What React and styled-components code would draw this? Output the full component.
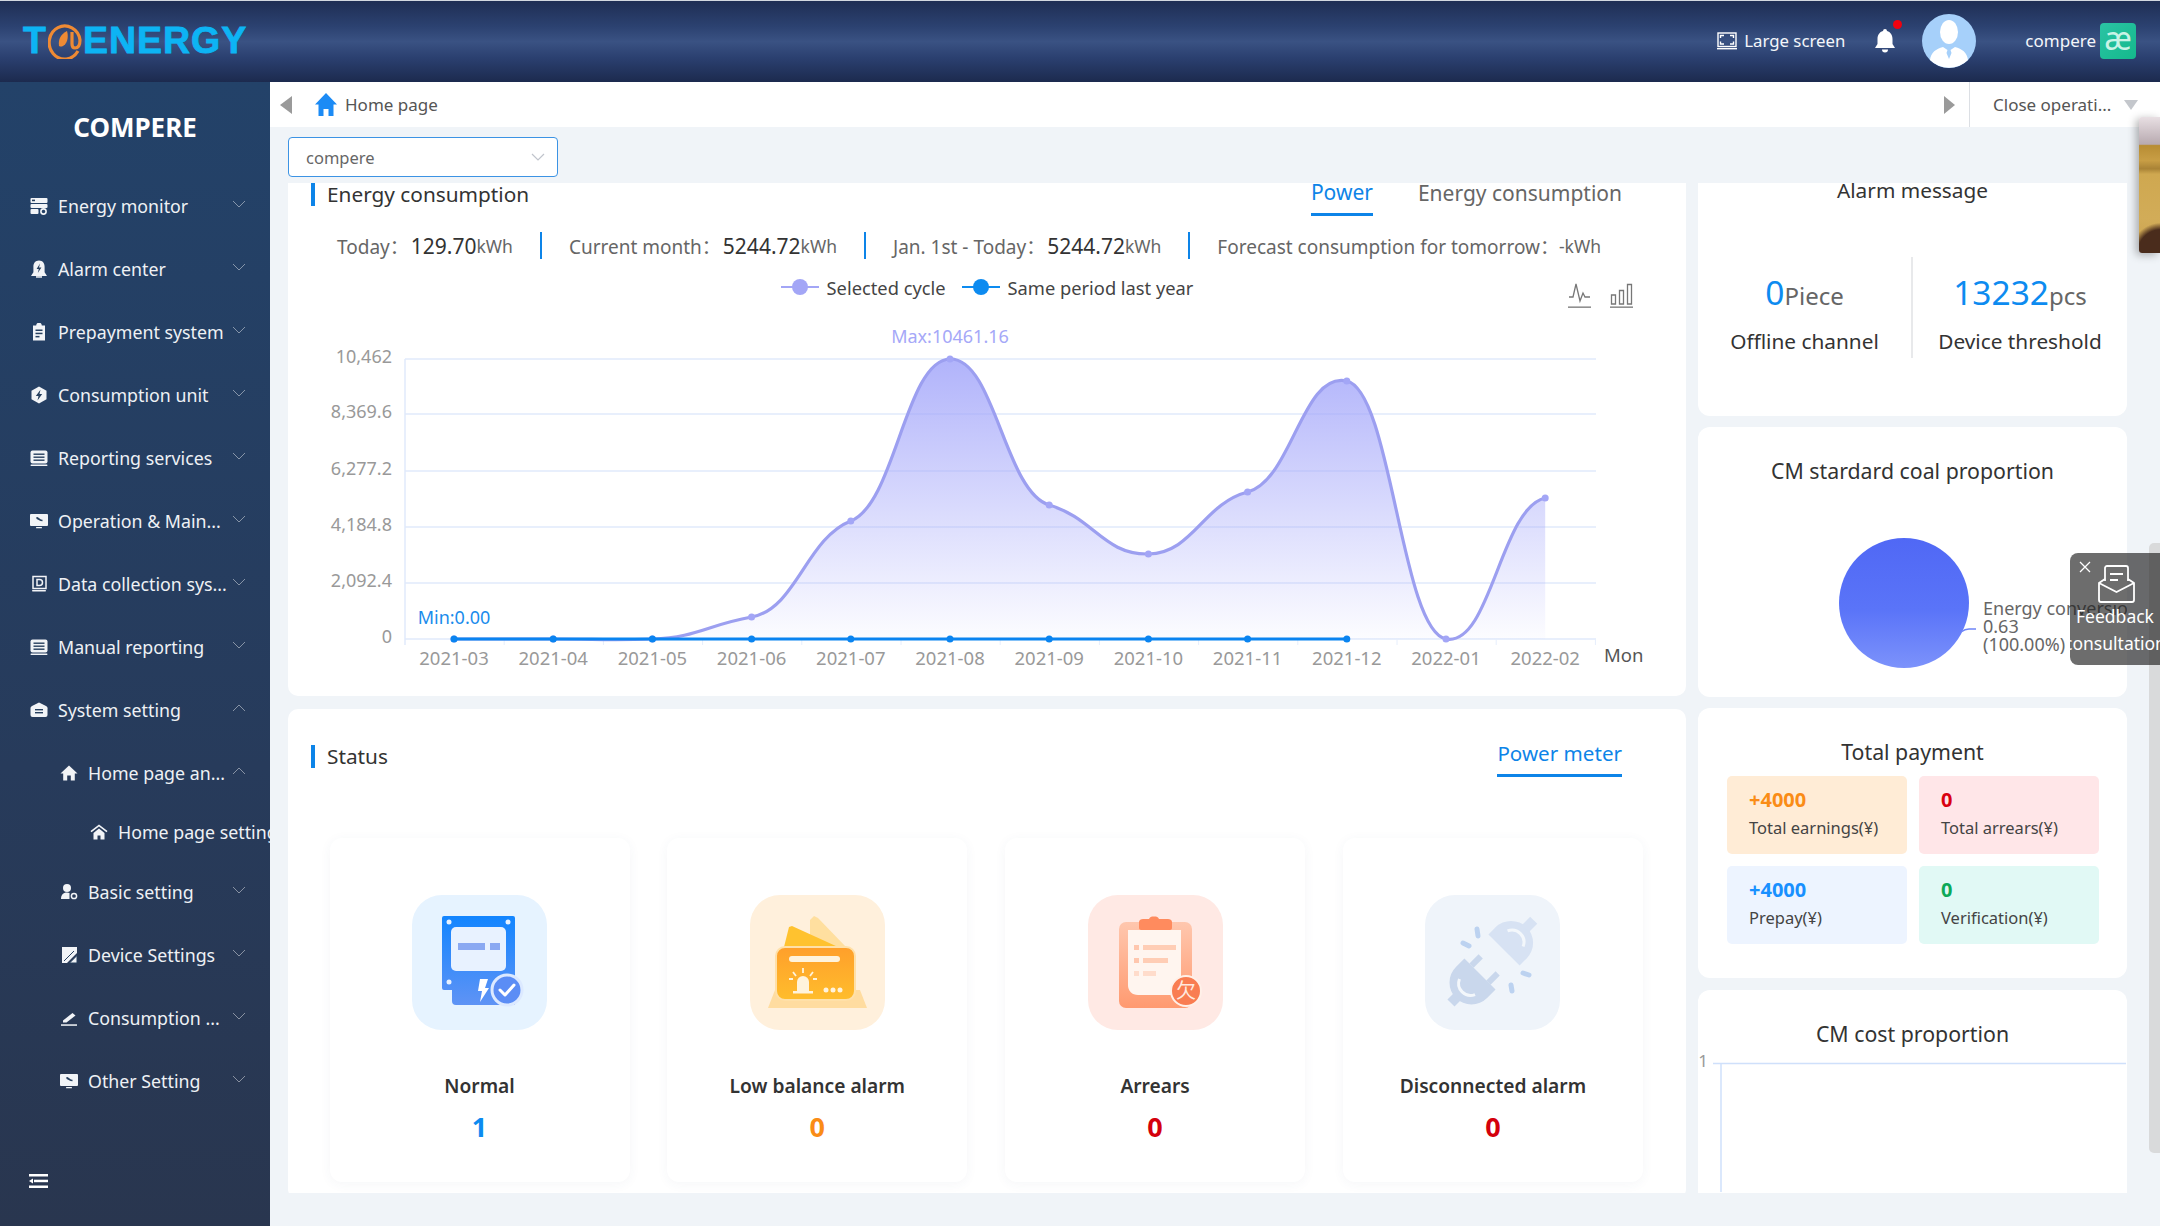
import styled, { createGlobalStyle } from "styled-components";

const GlobalStyle = createGlobalStyle`
  html, body {
    margin: 0;
    padding: 0;
    background: #f0f4f8;
  }
  * {
    box-sizing: border-box;
  }
  body {
    font-family: "Noto Sans", "Noto Sans CJK SC", sans-serif;
    color: #333;
  }
`;

const Page = styled.div`
  position: relative;
  width: 2160px;
  height: 1226px;
  overflow: hidden;
  display: flex;
  flex-direction: column;
  background: #f0f4f8;
`;

const TopBar = styled.header`
  height: 82px;
  flex: none;
  display: flex;
  align-items: center;
  border-top: 1px solid #d3d8e0;
  padding: 0 24px 2px 23px;
  color: #f4f6fa;
  background: linear-gradient(
    180deg,
    #1f2e54 0%,
    #2c4271 32%,
    #3a5283 50%,
    #2b4070 70%,
    #1c2a4e 100%
  );
`;

const Logo = styled.div`
  display: flex;
  align-items: center;
  gap: 1px;
  font-family: "Liberation Sans", sans-serif;
  font-weight: 700;
  font-size: 37.5px;
  letter-spacing: 1px;
  color: #0db4f4;
  -webkit-text-stroke: 0.8px #0db4f4;
`;

const TopRight = styled.div`
  margin-left: auto;
  display: flex;
  align-items: center;
`;

const ScreenLink = styled.div`
  display: flex;
  align-items: center;
  gap: 7px;
  font-size: 16.8px;
`;

const BellWrap = styled.div`
  position: relative;
  width: 20px;
  height: 24px;
  margin-left: 30px;
  margin-right: 27px;
`;

const RedDot = styled.span`
  position: absolute;
  top: -9px;
  right: -7px;
  width: 9px;
  height: 9px;
  border-radius: 50%;
  background: #f0020f;
`;

const UserName = styled.span`
  font-size: 17px;
  margin-left: 49px;
  margin-right: 4px;
`;

const BrandTile = styled.div`
  width: 36px;
  height: 36px;
  border-radius: 4px;
  display: flex;
  align-items: center;
  justify-content: center;
  background: linear-gradient(135deg, #2bc3a4, #14b98c);
  color: #c8f3e6;
  font-size: 32px;
  line-height: 1;
  padding-bottom: 5px;
`;

const Body = styled.div`
  flex: 1;
  min-height: 0;
  display: flex;
`;

const Sidebar = styled.aside`
  width: 270px;
  flex: none;
  display: flex;
  flex-direction: column;
  color: #eef1f5;
  background: linear-gradient(180deg, #234269 0%, #273b5b 60%, #29364f 100%);
`;

const Brand = styled.div`
  height: 92px;
  flex: none;
  display: flex;
  align-items: center;
  justify-content: center;
  padding-bottom: 3px;
  font-size: 26px;
  font-weight: 700;
  color: #fff;
`;

const MenuRow = styled.div`
  height: ${(p) => (p.$level === 3 ? 56 : 63)}px;
  flex: none;
  display: flex;
  align-items: center;
  overflow: hidden;
  white-space: nowrap;
  padding-left: ${(p) => 30 * p.$level}px;
  padding-right: 24px;
  font-size: 17.8px;
`;

const MenuIcon = styled.span`
  width: 18px;
  height: 18px;
  flex: none;
  margin-right: 10px;
  display: flex;
`;

const Chevron = styled.svg`
  width: 14px;
  height: 8px;
  flex: none;
  margin-left: auto;
  transform: translateY(-2px);
`;

const SideFoot = styled.div`
  margin-top: auto;
  height: 90px;
  display: flex;
  align-items: center;
  padding-left: 29px;
`;

const Main = styled.main`
  flex: 1;
  min-width: 0;
  display: flex;
  flex-direction: column;
`;

const Crumbs = styled.div`
  height: 45px;
  flex: none;
  display: flex;
  align-items: center;
  background: #fff;
  font-size: 17px;
  color: #555;
`;

const CrumbHome = styled.div`
  display: flex;
  align-items: center;
  gap: 8px;
  margin-left: 23px;
`;

const ArrowLeft = styled.span`
  margin-left: 10px;
  width: 0;
  height: 0;
  border-top: 9px solid transparent;
  border-bottom: 9px solid transparent;
  border-right: 12px solid #9a9a9a;
`;

const ArrowRight = styled.span`
  margin-left: auto;
  width: 0;
  height: 0;
  border-top: 9px solid transparent;
  border-bottom: 9px solid transparent;
  border-left: 11px solid #9a9a9a;
`;

const CloseOps = styled.div`
  width: 191px;
  height: 100%;
  margin-left: 14px;
  padding-left: 23px;
  display: flex;
  align-items: center;
  border-left: 1px solid #dcdfe4;
`;

const TriDown = styled.span`
  width: 0;
  height: 0;
  margin-left: 13px;
  border-left: 7px solid transparent;
  border-right: 7px solid transparent;
  border-top: 10px solid #c4c7cc;
`;

const FilterBar = styled.div`
  height: 56px;
  flex: none;
  padding: 10px 0 0 18px;
`;

const SelectBox = styled.div`
  width: 270px;
  height: 40px;
  display: flex;
  align-items: center;
  justify-content: space-between;
  padding: 0 12px 0 17px;
  background: #fff;
  border: 1px solid #3c93e4;
  border-radius: 4px;
  font-size: 16.5px;
  color: #666;
`;

const Scroller = styled.div`
  height: 1010px;
  flex: none;
  overflow: hidden;
  padding-left: 18px;
  display: flex;
  gap: 12px;
  align-items: flex-start;
`;

const LeftCol = styled.div`
  width: 1398px;
  flex: none;
  display: flex;
  flex-direction: column;
  gap: 13px;
`;

const RightCol = styled.div`
  width: 429px;
  flex: none;
  display: flex;
  flex-direction: column;
`;

const ChartCard = styled.section`
  height: 513px;
  background: #fff;
  border-radius: 0 0 10px 10px;
`;

const StatusCard = styled.section`
  height: 490px;
  padding-top: 34px;
  background: #fff;
  border-radius: 10px;
`;

const CardHead = styled.div`
  height: ${(p) => p.$height}px;
  display: flex;
  justify-content: space-between;
  align-items: flex-start;
  padding: 0 64px 0 23px;
`;

const CardTitle = styled.h2`
  margin: ${(p) => p.$top || 0}px 0 0;
  height: 23px;
  line-height: 23px;
  padding-left: 12px;
  border-left: 4px solid #0d84e8;
  font-size: 20.8px;
  font-weight: 400;
  color: #333;
`;

const Tabs = styled.div`
  display: flex;
  gap: 45px;
`;

const Tab = styled.div`
  height: ${(p) => p.$height}px;
  line-height: ${(p) => p.$line}px;
  font-size: ${(p) => p.$size || 21}px;
  color: ${(p) => (p.$active ? "#0d84e8" : "#666")};
  border-bottom: 3px solid ${(p) => (p.$active ? "#0d84e8" : "transparent")};
`;

const Stats = styled.div`
  height: 27px;
  margin-top: 16px;
  padding-left: 49px;
  display: flex;
  align-items: center;
  font-size: 19px;
  color: #666;
`;

const StatGroup = styled.div`
  display: flex;
  align-items: center;
`;

const StatValue = styled.span`
  font-size: 21px;
  color: #333;
  margin-left: 2px;
`;

const StatUnit = styled.span`
  font-size: 17.5px;
  color: #666;
`;

const StatSep = styled.span`
  width: 2px;
  height: 27px;
  margin: 0 27px;
  background: #0d84e8;
`;

const LegendRow = styled.div`
  position: relative;
  height: 28px;
  margin-top: 14px;
  display: flex;
  justify-content: center;
  align-items: center;
  gap: 16px;
  font-size: 18.3px;
  color: #444;
`;

const LegendItem = styled.div`
  display: flex;
  align-items: center;
  gap: 8px;
`;

const LegendMark = styled.span`
  position: relative;
  width: 38px;
  height: 2px;
  background: ${(p) => p.$color};

  &::after {
    content: "";
    position: absolute;
    left: 11px;
    top: -7px;
    width: 16px;
    height: 16px;
    border-radius: 50%;
    background: ${(p) => p.$color};
  }
`;

const ChartTools = styled.div`
  position: absolute;
  top: 10px;
  right: 53px;
  display: flex;
  gap: 19px;
`;

const MainChart = styled.svg`
  display: block;
  width: 1398px;
  height: 376px;
  margin-top: 19px;
`;

const MeterGrid = styled.div`
  display: grid;
  grid-template-columns: repeat(4, 300px);
  gap: 37.8px;
  margin-top: 61px;
  padding-left: 41.5px;
`;

const MeterCard = styled.div`
  height: 344px;
  padding-top: 57px;
  display: flex;
  flex-direction: column;
  align-items: center;
  background: #fff;
  border-radius: 12px;
  box-shadow: 0 2px 12px rgba(60, 80, 110, 0.05);
`;

const MeterTile = styled.div`
  width: 135px;
  height: 135px;
  border-radius: 30px;
  background: ${(p) => p.$bg};
`;

const MeterLabel = styled.div`
  margin-top: 42px;
  line-height: 28px;
  font-size: 19.2px;
  font-weight: 600;
  color: #333;
`;

const MeterValue = styled.div`
  margin-top: 9px;
  line-height: 36px;
  font-size: 27px;
  font-weight: 700;
  color: ${(p) => p.$color};
`;

const SideCard = styled.section`
  height: ${(p) => p.$height}px;
  margin-bottom: ${(p) => p.$gap || 0}px;
  flex: none;
  background: #fff;
  border-radius: 12px;
  overflow: hidden;
`;

const AlarmCard = styled(SideCard)`
  border-radius: 0 0 12px 12px;
  overflow: visible;
`;

const SideTitle = styled.h2`
  margin: 0;
  padding-top: ${(p) => p.$top}px;
  line-height: ${(p) => p.$line}px;
  text-align: center;
  font-size: ${(p) => p.$size || 21.3}px;
  font-weight: 400;
  color: #333;
`;

const AlarmStats = styled.div`
  display: grid;
  grid-template-columns: 213px 2px 1fr;
  height: 101px;
  margin-top: 60px;
`;

const AlarmDivider = styled.span`
  background: #e8e9eb;
`;

const AlarmCell = styled.div`
  padding-top: 11px;
  text-align: center;
`;

const AlarmNumber = styled.div`
  height: 48px;
  line-height: 48px;
  font-size: 33.5px;
  color: #0d8bf0;
`;

const AlarmUnit = styled.span`
  font-size: 24px;
  color: #666;
`;

const AlarmLabel = styled.div`
  margin-top: 13px;
  line-height: 24px;
  font-size: 20.8px;
  color: #333;
`;

const PieChart = styled.svg`
  display: block;
  width: 429px;
  height: 210px;
  margin-top: 1px;
`;

const PayGrid = styled.div`
  display: grid;
  grid-template-columns: 180px 180px;
  grid-auto-rows: 78px;
  gap: 12px;
  margin: 9px 0 0 29px;
`;

const PayTile = styled.div`
  padding: 12px 0 0 22px;
  border-radius: 5px;
  background: ${(p) => p.$bg};
`;

const PayValue = styled.div`
  line-height: 24px;
  font-size: 20px;
  font-weight: 700;
  color: ${(p) => p.$color};
`;

const PayLabel = styled.div`
  margin-top: 4px;
  line-height: 24px;
  font-size: 16.5px;
  color: #444;
`;

const CostChart = styled.svg`
  display: block;
  width: 429px;
  height: 143px;
`;

const ScrollThumb = styled.div`
  position: absolute;
  right: 0;
  top: 543px;
  width: 11px;
  height: 610px;
  border-radius: 5px 0 0 5px;
  background: #d9dadb;
`;

const Photo = styled.div`
  position: absolute;
  right: 0;
  top: 117px;
  width: 21px;
  height: 136px;
  border-radius: 3px 0 0 3px;
  box-shadow: -3px 2px 8px rgba(0, 0, 0, 0.3);
  background:
    radial-gradient(circle at 105% 100%, #4a2c1c 0, #4a2c1c 17%, transparent 22%),
    linear-gradient(
      180deg,
      #e8dfe3 0,
      #b8aab0 20%,
      #b88d34 21%,
      #c89e45 32%,
      #a98336 38%,
      #cfa850 42%,
      #d2ac58 75%,
      #c9a04f 100%
    );
`;

const Feedback = styled.div`
  position: absolute;
  right: 0;
  top: 553px;
  width: 90px;
  height: 112px;
  overflow: hidden;
  display: flex;
  flex-direction: column;
  align-items: center;
  padding-top: 12px;
  border-radius: 8px 0 0 8px;
  background: rgba(30, 30, 30, 0.65);
  color: #fff;
  font-size: 17.5px;
`;

const FeedbackClose = styled.svg`
  position: absolute;
  left: 9px;
  top: 8px;
`;

const FeedbackIcon = styled.svg`
  flex: none;
  margin-left: 3px;
`;

const FeedbackText = styled.div`
  width: 110px;
  flex: none;
  line-height: 27px;
  text-align: center;
  white-space: nowrap;
`;

const white = "#f2f4f7";
const navy = "#27405f";

const icons = {
  monitor: (
    <svg width="18" height="18" viewBox="0 0 18 18">
      <rect x="0.5" y="1" width="17" height="5" rx="1" fill={white} />
      <rect x="2" y="2.6" width="3" height="1.6" fill={navy} />
      <rect x="0.5" y="7" width="17" height="4" rx="1" fill={white} />
      <rect x="0.5" y="12" width="8" height="5" rx="1" fill={white} />
      <circle cx="13.5" cy="14.5" r="2.6" fill="none" stroke={white} strokeWidth="1.6" />
    </svg>
  ),
  alarm: (
    <svg width="18" height="18" viewBox="0 0 18 18">
      <path d="M9 0.5c-3.7 0-5.6 2.9-5.6 6.2v5.6L1 16h16l-2.4-3.7V6.7C14.600 3.400 12.700 0.500 9 0.500z" fill={white} />
      <path d="M10 3.500 6.600 9h2.200l-1 4 3.600-5.600H9z" fill={navy} />
      <rect x="6" y="16.200" width="6" height="1.500" fill={white} />
    </svg>
  ),
  prepay: (
    <svg width="18" height="18" viewBox="0 0 18 18">
      <path d="M3 2.500h3.200a2.800 2.800 0 0 1 5.600 0H15v15H3z" fill={white} />
      <rect x="5.500" y="6.500" width="7" height="1.500" fill={navy} />
      <rect x="5.500" y="9.700" width="7" height="1.500" fill={navy} />
      <rect x="5.500" y="12.900" width="4" height="1.500" fill={navy} />
    </svg>
  ),
  unit: (
    <svg width="18" height="18" viewBox="0 0 18 18">
      <path d="M9 .5 16.500 4.700v8.600L9 17.500 1.500 13.300V4.700z" fill={white} />
      <path d="M10.500 3.800 5.800 10h2.700l-1 4.400 4.700-6.300H9.500z" fill={navy} />
    </svg>
  ),
  report: (
    <svg width="18" height="18" viewBox="0 0 18 18">
      <rect x="0.500" y="1.500" width="17" height="13" rx="2" fill={white} />
      <rect x="3.500" y="4.500" width="11" height="1.400" fill={navy} />
      <rect x="3.500" y="7.500" width="11" height="1.400" fill={navy} />
      <rect x="3.500" y="10.500" width="11" height="1.400" fill={navy} />
      <rect x="0.500" y="15.500" width="17" height="1.500" rx="0.700" fill={white} />
    </svg>
  ),
  ops: (
    <svg width="18" height="18" viewBox="0 0 18 18">
      <rect x="0" y="2" width="18" height="12" rx="1" fill={white} />
      <path d="M6 5.500l1.500-.5 3.500 2.500 1.500.3v1.500L10.500 9 6.700 7z" fill={navy} />
      <rect x="6" y="15" width="6" height="1.300" rx="0.600" fill={white} />
    </svg>
  ),
  data: (
    <svg width="18" height="18" viewBox="0 0 18 18">
      <rect x="3" y="1.500" width="13" height="12" fill="none" stroke={white} strokeWidth="1.500" />
      <path d="M7 4.500h2.500a3 3 0 0 1 0 6H7z" fill="none" stroke={white} strokeWidth="1.500" />
      <rect x="2" y="15" width="14" height="1.500" rx="0.700" fill={white} />
    </svg>
  ),
  system: (
    <svg width="18" height="18" viewBox="0 0 18 18">
      <path d="M9 1.500 16 5c1 .5 1.500 1.200 1.500 2.200V14a2 2 0 0 1-2 2h-13a2 2 0 0 1-2-2V7.200C.5 6.200 1 5.500 2 5z" fill={white} />
      <rect x="5" y="8" width="8" height="1.400" fill={navy} />
      <rect x="5" y="11" width="8" height="1.400" fill={navy} />
    </svg>
  ),
  home: (
    <svg width="18" height="18" viewBox="0 0 18 18">
      <path d="M9 1.500 0.500 9.500H3.200V16.500H7.200V11.500H10.800V16.500H14.800V9.500H17.500z" fill={white} />
    </svg>
  ),
  homeSet: (
    <svg width="18" height="18" viewBox="0 0 18 18">
      <path d="M9 1.500 0.500 8l1 1.200L9 3.500l7.500 5.700 1-1.200z" fill={white} />
      <path d="M9 5.500 3.500 10v6.500h4v-4h3v4h4V10z" fill={white} />
    </svg>
  ),
  basic: (
    <svg width="18" height="18" viewBox="0 0 18 18">
      <circle cx="7" cy="5" r="4" fill={white} />
      <path d="M1 16c0-4 2-6.500 6-6.500 1 0 1.800.2 2.500.5V16z" fill={white} />
      <circle cx="14" cy="13" r="2.600" fill="none" stroke={white} strokeWidth="1.500" />
    </svg>
  ),
  device: (
    <svg width="18" height="18" viewBox="0 0 18 18">
      <path d="M2 1h15v6L7 17H2z" fill={white} />
      <path d="M17 9.500V17H9.500zM4 15 14 5" fill={white} stroke={navy} strokeWidth="1" />
    </svg>
  ),
  pencil: (
    <svg width="18" height="18" viewBox="0 0 18 18">
      <path d="M3 11.500 12.500 4l3 2.500-9 7H3z" fill={white} />
      <rect x="1" y="15.300" width="16" height="1.500" fill={white} />
    </svg>
  ),
};

const menu = [
  { level: 1, icon: "monitor", label: "Energy monitor", arrow: "down" },
  { level: 1, icon: "alarm", label: "Alarm center", arrow: "down" },
  { level: 1, icon: "prepay", label: "Prepayment system", arrow: "down" },
  { level: 1, icon: "unit", label: "Consumption unit", arrow: "down" },
  { level: 1, icon: "report", label: "Reporting services", arrow: "down" },
  { level: 1, icon: "ops", label: "Operation & Main...", arrow: "down" },
  { level: 1, icon: "data", label: "Data collection sys...", arrow: "down" },
  { level: 1, icon: "report", label: "Manual reporting", arrow: "down" },
  { level: 1, icon: "system", label: "System setting", arrow: "up" },
  { level: 2, icon: "home", label: "Home page an...", arrow: "up" },
  { level: 3, icon: "homeSet", label: "Home page setting" },
  { level: 2, icon: "basic", label: "Basic setting", arrow: "down" },
  { level: 2, icon: "device", label: "Device Settings", arrow: "down" },
  { level: 2, icon: "pencil", label: "Consumption ...", arrow: "down" },
  { level: 2, icon: "ops", label: "Other Setting", arrow: "down" },
];

const months = [
  "2021-03", "2021-04", "2021-05", "2021-06", "2021-07", "2021-08",
  "2021-09", "2021-10", "2021-11", "2021-12", "2022-01", "2022-02",
];
const curveY = [639, 639, 639, 617, 521, 359, 505, 554, 492, 381, 639, 498];
const gridLines = [
  { y: 359, label: "10,462" },
  { y: 414, label: "8,369.6" },
  { y: 471, label: "6,277.2" },
  { y: 527, label: "4,184.8" },
  { y: 583, label: "2,092.4" },
  { y: 639, label: "0" },
];
const stepX = 99.2;
const firstX = 454;
const pointX = (i) => firstX + stepX * i;

function buildCurve() {
  const slope = (i) => {
    const a = curveY[Math.max(i - 1, 0)];
    const b = curveY[Math.min(i + 1, curveY.length - 1)];
    return (0.3 * (b - a)) / (2 * stepX);
  };
  const h = stepX * 0.45;
  let d = `M${pointX(0)} ${curveY[0]}`;
  for (let i = 0; i < curveY.length - 1; i++) {
    const x0 = pointX(i);
    const x1 = pointX(i + 1);
    d += ` C${x0 + h} ${curveY[i] + slope(i) * h} ${x1 - h} ${curveY[i + 1] - slope(i + 1) * h} ${x1} ${curveY[i + 1]}`;
  }
  return d;
}

const curve = buildCurve();

const stats = [
  { label: "Today：", value: "129.70", unit: "kWh" },
  { label: "Current month：", value: "5244.72", unit: "kWh" },
  { label: "Jan. 1st - Today：", value: "5244.72", unit: "kWh" },
  { label: "Forecast consumption for tomorrow：", unit: "-kWh" },
];

const payments = [
  { value: "+4000", label: "Total earnings(¥)", bg: "#ffecd6", color: "#fa8c16" },
  { value: "0", label: "Total arrears(¥)", bg: "#ffe6e8", color: "#d9000f" },
  { value: "+4000", label: "Prepay(¥)", bg: "#edf4ff", color: "#1890ff" },
  { value: "0", label: "Verification(¥)", bg: "#e1f9f5", color: "#0da958" },
];

function NormalArt() {
  return (
    <svg width="135" height="135" viewBox="0 0 135 135">
      <defs>
        <linearGradient id="meterBody" x1="0" y1="0" x2="0" y2="1">
          <stop offset="0" stopColor="#1285ff" />
          <stop offset="1" stopColor="#5f93f5" />
        </linearGradient>
      </defs>
      <path d="M32 21h69a2 2 0 0 1 2 2v87H44a4 4 0 0 1-4-4V95h-8a2 2 0 0 1-2-2V23a2 2 0 0 1 2-2z" fill="url(#meterBody)" />
      <rect x="39" y="32" width="55" height="44" rx="5" fill="#e8f2ff" />
      <rect x="46" y="48" width="27" height="7" fill="#8aa9f2" />
      <rect x="78" y="48" width="10" height="7" fill="#8aa9f2" />
      <circle cx="37" cy="27" r="2.500" fill="#e8f2ff" />
      <circle cx="96" cy="27" r="2.500" fill="#e8f2ff" />
      <circle cx="37" cy="87" r="2.500" fill="#e8f2ff" />
      <path d="M68 84h8l-3 9h4l-9 14 2-11h-4z" fill="#fff" />
      <circle cx="95" cy="95" r="15" fill="#5b8df5" stroke="#dce9ff" strokeWidth="3" />
      <path d="M88 95l5 5 9-10" fill="none" stroke="#fff" strokeWidth="3" strokeLinecap="round" strokeLinejoin="round" />
    </svg>
  );
}

function LowBalanceArt() {
  return (
    <svg width="135" height="135" viewBox="0 0 135 135">
      <defs>
        <linearGradient id="walletBody" x1="0" y1="0" x2="0" y2="1">
          <stop offset="0" stopColor="#ff9f2b" />
          <stop offset="1" stopColor="#ffbd2c" />
        </linearGradient>
      </defs>
      <path d="M18 113l7-18h85l7 18z" fill="#ffdca0" />
      <path d="M60 25l4-4 4 2 28 29-3 30H60z" fill="#ffdf9f" />
      <path d="M34 52l5-20 3-1 46 21z" fill="#ffc22f" />
      <rect x="26" y="52" width="79" height="53" rx="9" fill="url(#walletBody)" stroke="#ffe0a8" strokeWidth="2" />
      <rect x="39" y="61" width="51" height="6" rx="3" fill="#fff3dc" />
      <path d="M47 97v-10a6 6 0 0 1 12 0v10z" fill="#fff3dc" />
      <rect x="43" y="96" width="20" height="2.500" fill="#fff3dc" />
      <path d="M53 73v5M43 77l3 4M63 77l-3 4M39 84h4M63 84h4" stroke="#fff3dc" strokeWidth="1.800" />
      <circle cx="76" cy="95" r="2.500" fill="#fff3dc" />
      <circle cx="83" cy="95" r="2.500" fill="#fff3dc" />
      <circle cx="90" cy="95" r="2.500" fill="#fff3dc" />
    </svg>
  );
}

function ArrearsArt() {
  return (
    <svg width="135" height="135" viewBox="0 0 135 135">
      <defs>
        <linearGradient id="boardBody" x1="0" y1="0" x2="0" y2="1">
          <stop offset="0" stopColor="#ffc7ae" />
          <stop offset="1" stopColor="#ff9a70" />
        </linearGradient>
      </defs>
      <rect x="31" y="27" width="73" height="86" rx="7" fill="url(#boardBody)" />
      <path d="M40 35h53v65H50c-6 0-10-4-10-10z" fill="#fff5ef" />
      <path d="M51 27c0-2 2-3 4-3h6c1-2 2-2.500 5-2.500s4 .5 5 2.500h9c2 0 4 1 4 3v6c0 1-1 2-2 2H53c-1 0-2-1-2-2z" fill="#ff8b5e" />
      <rect x="46" y="50" width="5" height="5" fill="#ffc7ae" />
      <rect x="55" y="50" width="33" height="5" fill="#ffcdb5" />
      <rect x="46" y="63" width="5" height="5" fill="#ffc7ae" />
      <rect x="55" y="63" width="25" height="5" fill="#ffcdb5" />
      <rect x="46" y="76" width="5" height="5" fill="#ffdccb" />
      <rect x="55" y="76" width="13" height="5" fill="#ffdccb" />
      <circle cx="98" cy="96" r="15" fill="#f97d52" stroke="#fff0e8" strokeWidth="2" />
      <text x="98" y="103" textAnchor="middle" fontSize="20" fill="#ffe9df" fontFamily="Noto Sans CJK SC, sans-serif">欠</text>
    </svg>
  );
}

function DisconnectArt() {
  return (
    <svg width="135" height="135" viewBox="0 0 135 135">
      <g transform="rotate(-45 67 67)" fill="#c9d7ec">
        <rect x="9" y="62" width="12" height="10" />
        <path d="M50 45H38a22 22 0 0 0 0 44h12z" />
        <rect x="50" y="52" width="13" height="6" />
        <rect x="50" y="76" width="13" height="6" />
        <path d="M32 56a12 12 0 0 0 0 22" fill="none" stroke="#f3f7fb" strokeWidth="3" />
        <path d="M84 45h10a22 22 0 0 1 0 44H84z" fill="#d7e2f3" />
        <rect x="114" y="62" width="12" height="10" fill="#d7e2f3" />
        <path d="M100 56a12 12 0 0 1 0 22" fill="none" stroke="#f3f7fb" strokeWidth="3" />
      </g>
      <g stroke="#bcd2f0" strokeWidth="5" strokeLinecap="round">
        <path d="M52 34l1 7M38 48l6 3M98 78l6 2M86 90l1 6" />
      </g>
    </svg>
  );
}

const meters = [
  { label: "Normal", value: 1, color: "#0d8bf0", bg: "#e6f3ff", Art: NormalArt },
  { label: "Low balance alarm", value: 0, color: "#fa8c16", bg: "#fff0dc", Art: LowBalanceArt },
  { label: "Arrears", value: 0, color: "#d4000c", bg: "#ffe9e4", Art: ArrearsArt },
  { label: "Disconnected alarm", value: 0, color: "#d4000c", bg: "#eff4fa", Art: DisconnectArt },
];

export default function App() {
  return (
    <Page>
      <GlobalStyle />
      <TopBar>
        <Logo>
          T
          <svg width="34" height="36" viewBox="0 0 34 36">
            <path d="M30 28A15.500 16.500 0 1 1 32 17c0 5-2 8-5 8-2 0-3-1.500-3-4V9" fill="none" stroke="#ee8a34" strokeWidth="3.200" />
            <path d="M19 8c-6 3-9 8-8 15 1 .5 2 .7 3 .5 5-2 7-9 5-15.500z" fill="#ee8a34" />
          </svg>
          ENERGY
        </Logo>
        <TopRight>
          <ScreenLink>
            <svg width="20" height="18" viewBox="0 0 20 18">
              <rect x="1" y="1" width="18" height="13.500" fill="none" stroke="#fff" strokeWidth="1.400" />
              <path d="M3.500 6V3.500H7M13 3.500h3.500V6M16.500 9.500V12H13M7 12H3.500V9.500" fill="none" stroke="#fff" strokeWidth="1.400" />
              <rect x="0" y="16" width="20" height="1.400" fill="#fff" />
            </svg>
            Large screen
          </ScreenLink>
          <BellWrap>
            <RedDot />
            <svg width="20" height="24" viewBox="0 0 20 24">
              <path d="M10 0a2 2 0 0 1 2 2c3.500 1 5.500 4 5.500 8v5l2.500 4H0l2.500-4v-5c0-4 2-7 5.500-8a2 2 0 0 1 2-2z" fill="#fff" />
              <path d="M7 20.500h6a3 3 0 0 1-6 0z" fill="#fff" />
            </svg>
          </BellWrap>
          <svg width="54" height="54" viewBox="0 0 54 54">
            <circle cx="27" cy="27" r="27" fill="#a6d0fa" />
            <ellipse cx="27" cy="18" rx="9" ry="12" fill="#fff" />
            <path d="M8 46c1-8 6-11 13-13l6 4 6-4c7 2 12 5 13 13a27 27 0 0 1-38 0z" fill="#fff" />
            <path d="M25.500 36h3l1 3-2.500 6-2.500-6z" fill="#a6d0fa" />
          </svg>
          <UserName>compere</UserName>
          <BrandTile>æ</BrandTile>
        </TopRight>
      </TopBar>

      <Body>
        <Sidebar>
          <Brand>COMPERE</Brand>
          {menu.map((item) => (
            <MenuRow key={item.label} $level={item.level}>
              <MenuIcon>{icons[item.icon]}</MenuIcon>
              {item.label}
              {item.arrow && (
                <Chevron viewBox="0 0 14 8">
                  <path
                    d={item.arrow === "up" ? "M1 7l6-6 6 6" : "M1 1l6 6 6-6"}
                    fill="none"
                    stroke="rgba(255,255,255,0.45)"
                    strokeWidth="1"
                  />
                </Chevron>
              )}
            </MenuRow>
          ))}
          <SideFoot>
            <svg width="19" height="14" viewBox="0 0 19 14">
              <rect x="0" y="0" width="19" height="2.500" fill="#fff" />
              <rect x="5" y="5.700" width="14" height="2.500" fill="#fff" />
              <path d="M0 7l4-2.500v5z" fill="#fff" />
              <rect x="0" y="11.500" width="19" height="2.500" fill="#fff" />
            </svg>
          </SideFoot>
        </Sidebar>

        <Main>
          <Crumbs>
            <ArrowLeft />
            <CrumbHome>
              <svg width="22" height="23" viewBox="0 0 22 23">
                <path d="M11 0 0 11.500h3.500V23h5v-7h5v7h5V11.500H22z" fill="#1c8bf5" />
              </svg>
              Home page
            </CrumbHome>
            <ArrowRight />
            <CloseOps>
              Close operati...
              <TriDown />
            </CloseOps>
          </Crumbs>

          <FilterBar>
            <SelectBox>
              compere
              <svg width="14" height="8" viewBox="0 0 14 8">
                <path d="M1 1l6 6 6-6" fill="none" stroke="#c0c4cc" strokeWidth="1.200" />
              </svg>
            </SelectBox>
          </FilterBar>

          <Scroller>
            <LeftCol>
              <ChartCard>
                <CardHead $height={33}>
                  <CardTitle>Energy consumption</CardTitle>
                  <Tabs>
                    <Tab $active $height={33} $line={18}>Power</Tab>
                    <Tab $height={33} $line={20}>Energy consumption</Tab>
                  </Tabs>
                </CardHead>

                <Stats>
                  {stats.map((s, i) => (
                    <StatGroup key={s.label}>
                      {i > 0 && <StatSep />}
                      <span>{s.label}</span>
                      {s.value && <StatValue>{s.value}</StatValue>}
                      <StatUnit>{s.unit}</StatUnit>
                    </StatGroup>
                  ))}
                </Stats>

                <LegendRow>
                  <LegendItem>
                    <LegendMark $color="#a3a6f6" />
                    Selected cycle
                  </LegendItem>
                  <LegendItem>
                    <LegendMark $color="#0d8bf0" />
                    Same period last year
                  </LegendItem>
                  <ChartTools>
                    <svg width="23" height="25" viewBox="0 0 23 25">
                      <path d="M1 14h4l3-13 4 17 3-8 2 4h5" fill="none" stroke="#777" strokeWidth="1.300" />
                      <rect x="0" y="23.500" width="23" height="1.300" fill="#777" />
                    </svg>
                    <svg width="23" height="25" viewBox="0 0 23 25">
                      <path d="M1.500 12h4v9h-4zM9.500 7.500h4V21h-4zM17.500 1.500h4V21h-4z" fill="none" stroke="#777" strokeWidth="1.300" />
                      <rect x="0" y="23.500" width="23" height="1.300" fill="#777" />
                    </svg>
                  </ChartTools>
                </LegendRow>

                <MainChart viewBox="288 320 1398 376">
                  <defs>
                    <linearGradient id="areaFill" x1="0" y1="359" x2="0" y2="639" gradientUnits="userSpaceOnUse">
                      <stop offset="0" stopColor="#a3a6fa" stopOpacity="0.85" />
                      <stop offset="1" stopColor="#a3a6fa" stopOpacity="0.03" />
                    </linearGradient>
                  </defs>
                  <g fontFamily="Noto Sans, sans-serif">
                    {gridLines.map((g) => (
                      <g key={g.y}>
                        <line x1="405" x2="1596" y1={g.y} y2={g.y} stroke="#e0eafb" strokeWidth="1.500" />
                        <text x="392" y={g.y + 4} textAnchor="end" fontSize="18" fill="#999">{g.label}</text>
                      </g>
                    ))}
                    <line x1="405" x2="405" y1="359" y2="645" stroke="#e0eafb" strokeWidth="1.500" />
                    {months.map((m, i) => (
                      <g key={m}>
                        <line x1={405 + stepX * (i + 1)} x2={405 + stepX * (i + 1)} y1="639" y2="645" stroke="#e6eefc" />
                        <text x={pointX(i)} y="665" textAnchor="middle" fontSize="18.500" fill="#999">{m}</text>
                      </g>
                    ))}
                    <text x="1604" y="662" fontSize="18.500" fill="#555">Mon</text>
                    <path d={`${curve} L${pointX(11)} 639 L${pointX(0)} 639 Z`} fill="url(#areaFill)" />
                    <path d={curve} fill="none" stroke="#9c9ff0" strokeWidth="3.200" />
                    {curveY.map((y, i) => (
                      <circle key={months[i]} cx={pointX(i)} cy={y} r="3.500" fill="#a3a6f6" />
                    ))}
                    <line x1={pointX(0)} x2={pointX(9)} y1="639" y2="639" stroke="#0a84f0" strokeWidth="3" />
                    {months.slice(0, 10).map((m, i) => (
                      <circle key={m} cx={pointX(i)} cy="639" r="3.500" fill="#0a84f0" />
                    ))}
                    <text x="950" y="343" textAnchor="middle" fontSize="18" fill="#a5a8f8">Max:10461.16</text>
                    <text x="454" y="624" textAnchor="middle" fontSize="18" fill="#1a8cec">Min:0.00</text>
                  </g>
                </MainChart>
              </ChartCard>

              <StatusCard>
                <CardHead $height={34}>
                  <CardTitle $top={2}>Status</CardTitle>
                  <Tab $active $height={34} $line={20} $size={20.6}>Power meter</Tab>
                </CardHead>
                <MeterGrid>
                  {meters.map((m) => (
                    <MeterCard key={m.label}>
                      <MeterTile $bg={m.bg}>
                        <m.Art />
                      </MeterTile>
                      <MeterLabel>{m.label}</MeterLabel>
                      <MeterValue $color={m.color}>{m.value}</MeterValue>
                    </MeterCard>
                  ))}
                </MeterGrid>
              </StatusCard>
            </LeftCol>

            <RightCol>
              <AlarmCard $height={233} $gap={11}>
                <SideTitle $top={0} $line={14} $size={20.8}>Alarm message</SideTitle>
                <AlarmStats>
                  <AlarmCell>
                    <AlarmNumber>0<AlarmUnit>Piece</AlarmUnit></AlarmNumber>
                    <AlarmLabel>Offline channel</AlarmLabel>
                  </AlarmCell>
                  <AlarmDivider />
                  <AlarmCell>
                    <AlarmNumber>13232<AlarmUnit>pcs</AlarmUnit></AlarmNumber>
                    <AlarmLabel>Device threshold</AlarmLabel>
                  </AlarmCell>
                </AlarmStats>
              </AlarmCard>

              <SideCard $height={270} $gap={11}>
                <SideTitle $top={29} $line={30}>CM stardard coal proportion</SideTitle>
                <PieChart viewBox="1698 487 429 210">
                  <defs>
                    <linearGradient id="pieFill" x1="0" y1="0" x2="0" y2="1">
                      <stop offset="0" stopColor="#5068f5" />
                      <stop offset="0.55" stopColor="#5a74f8" />
                      <stop offset="1" stopColor="#7c92fb" />
                    </linearGradient>
                  </defs>
                  <circle cx="1904" cy="603" r="65" fill="url(#pieFill)" />
                  <path d="M1961 632q4-3 8-3h7" fill="none" stroke="#6f85f8" strokeWidth="1.500" />
                  <g fontFamily="Noto Sans, sans-serif" fontSize="18" fill="#666">
                    <text x="1983" y="615">Energy conversion</text>
                    <text x="1983" y="633">0.63</text>
                    <text x="1983" y="651">(100.00%)</text>
                  </g>
                </PieChart>
              </SideCard>

              <SideCard $height={270} $gap={12}>
                <SideTitle $top={29} $line={30}>Total payment</SideTitle>
                <PayGrid>
                  {payments.map((p) => (
                    <PayTile key={p.label} $bg={p.bg}>
                      <PayValue $color={p.color}>{p.value}</PayValue>
                      <PayLabel>{p.label}</PayLabel>
                    </PayTile>
                  ))}
                </PayGrid>
              </SideCard>

              <SideCard $height={300}>
                <SideTitle $top={29} $line={30}>CM cost proportion</SideTitle>
                <CostChart viewBox="1698 1050 429 143">
                  <line x1="1713" x2="2126" y1="1064.500" y2="1064.500" stroke="#cfe0fb" strokeWidth="1.500" />
                  <line x1="1721" x2="1721" y1="1064" y2="1193" stroke="#cfe0fb" strokeWidth="1.500" />
                  <text x="1703" y="1068" textAnchor="middle" fontFamily="Noto Sans, sans-serif" fontSize="17" fill="#999">1</text>
                </CostChart>
              </SideCard>
            </RightCol>
          </Scroller>
        </Main>
      </Body>

      <ScrollThumb />
      <Photo />
      <Feedback>
        <FeedbackClose width="12" height="12" viewBox="0 0 12 12">
          <path d="M1 1l10 10M11 1 1 11" stroke="#fff" strokeWidth="1.300" />
        </FeedbackClose>
        <FeedbackIcon width="37" height="38" viewBox="0 0 37 38">
          <path d="M7 16V3a2 2 0 0 1 2-2h19a2 2 0 0 1 2 2v13" fill="none" stroke="#fff" strokeWidth="1.800" />
          <path d="M12 9h13M12 15h8" stroke="#fff" strokeWidth="1.800" />
          <path d="M7 14 1 18v17a2 2 0 0 0 2 2h31a2 2 0 0 0 2-2V18l-6-4M1 18l17.500 9L36 18" fill="none" stroke="#fff" strokeWidth="1.800" />
        </FeedbackIcon>
        <FeedbackText>Feedback</FeedbackText>
        <FeedbackText>consultation</FeedbackText>
      </Feedback>
    </Page>
  );
}
